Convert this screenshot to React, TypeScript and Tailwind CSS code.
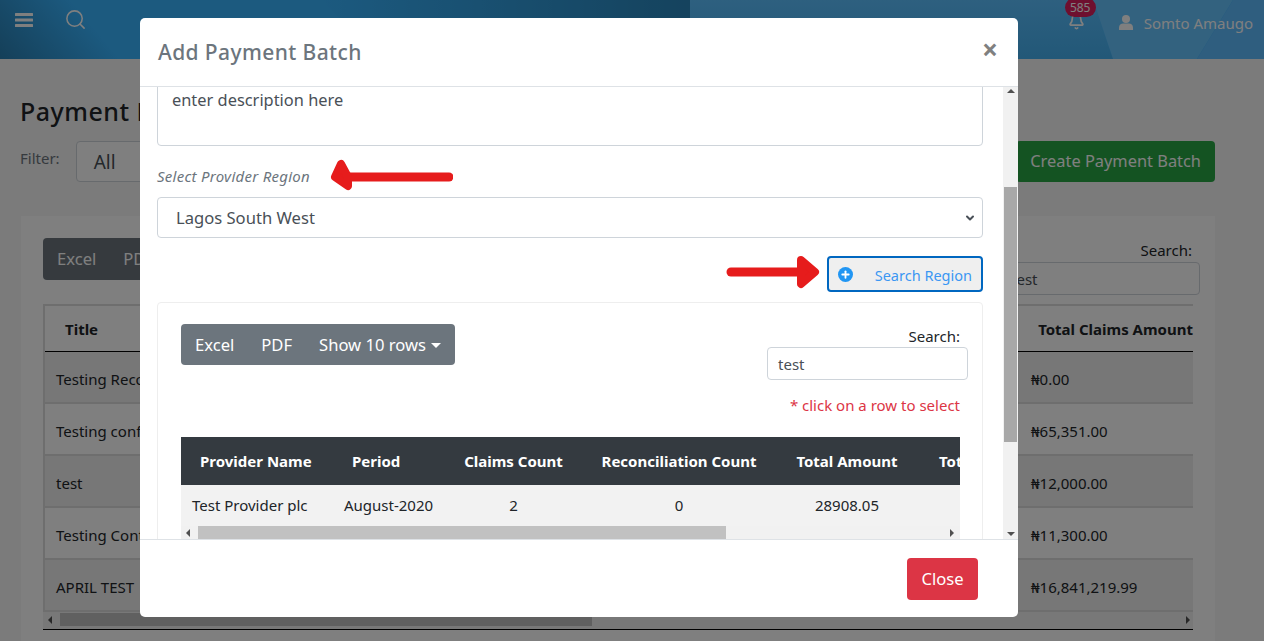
import { ChevronDown, Plus, Search, Bell } from 'lucide-react';

const outerRows = [
  { title: 'Testing Reco', amount: '₦0.00', striped: true },
  { title: 'Testing conf', amount: '₦65,351.00', striped: false },
  { title: 'test', amount: '₦12,000.00', striped: true },
  { title: 'Testing Cont', amount: '₦11,300.00', striped: false },
  { title: 'APRIL TEST', amount: '₦16,841,219.99', striped: true },
];

function LeftArrow() {
  return (
    <svg width="124" height="36" viewBox="0 0 124 36" className="shrink-0">
      <path d="M19 18H120" stroke="#e61c1c" strokeWidth="9" strokeLinecap="round" />
      <path d="M12 5L6 18L19 27L19 18Z" fill="#e61c1c" stroke="#e61c1c" strokeWidth="8" strokeLinejoin="round" />
    </svg>
  );
}

function RightArrow() {
  return (
    <svg width="96" height="36" viewBox="0 0 96 36" className="-mt-1 mr-[6px] shrink-0">
      <path d="M6 18H80" stroke="#e61c1c" strokeWidth="9" strokeLinecap="round" />
      <path d="M76 6L90 18L76 30Z" fill="#e61c1c" stroke="#e61c1c" strokeWidth="8" strokeLinejoin="round" />
    </svg>
  );
}

function TriangleButton({ dir }: { dir: 'up' | 'down' | 'left' | 'right' }) {
  const d = {
    up: 'M1 6L5 2L9 6Z',
    down: 'M1 3L5 7L9 3Z',
    left: 'M6 1L2 5L6 9Z',
    right: 'M3 1L7 5L3 9Z',
  }[dir];
  return (
    <svg width="10" height="10" viewBox="0 0 10 10" className="shrink-0">
      <path d={d} fill="#505050" />
    </svg>
  );
}

function HeaderArt() {
  return (
    <svg width="1264" height="59" viewBox="0 0 1264 59" className="absolute inset-0">
      <defs>
        <linearGradient id="headerLeft" gradientUnits="userSpaceOnUse" x1="0" y1="59" x2="70" y2="0">
          <stop offset="0" stopColor="#2a7fb2" />
          <stop offset="1" stopColor="#38b4ff" />
        </linearGradient>
        <linearGradient id="headerMid" x1="0" y1="0" x2="1" y2="0">
          <stop offset="0" stopColor="#38b4ff" />
          <stop offset="1" stopColor="#2a86bc" />
        </linearGradient>
        <linearGradient id="headerWedge" x1="0" y1="0" x2="0" y2="1">
          <stop offset="0" stopColor="#5cc0ff" />
          <stop offset="1" stopColor="#44b0f0" />
        </linearGradient>
      </defs>
      <rect width="1264" height="59" fill="url(#headerLeft)" />
      <polygon points="322,0 690,0 690,59 380,59" fill="url(#headerMid)" />
      <polygon points="690,0 1093,0 1113,59 690,59" fill="url(#headerWedge)" />
      <polygon points="1093,0 1233,0 1197,59 1113,59" fill="#66c4ff" />
      <polygon points="1233,0 1264,0 1264,59 1197,59" fill="#5ebcff" />
    </svg>
  );
}

function Page() {
  return (
    <div className="min-h-[641px] bg-[#f6f6f6]">
      <header className="relative flex h-[59px] items-start pl-[15px] pr-[11px] text-white">
        <HeaderArt />
        <svg width="18" height="14" viewBox="0 0 18 14" className="relative mt-[13px]">
          <rect width="18" height="3" rx="0.5" fill="currentColor" />
          <rect y="5.5" width="18" height="3" rx="0.5" fill="currentColor" />
          <rect y="11" width="18" height="3" rx="0.5" fill="currentColor" />
        </svg>
        <Search size={23} strokeWidth={1.6} className="relative ml-[31px] mt-[8px]" />
        <div className="relative ml-auto flex items-start">
          <div className="relative mt-[13px]">
            <Bell size={17} strokeWidth={2.4} />
            <span className="absolute left-[-3px] top-[-15px] flex h-[19px] w-[31px] items-center justify-center rounded-full bg-[#dc1e5e] text-[12px] leading-none text-white">585</span>
          </div>
          <svg width="14" height="15" viewBox="0 0 14 15" className="ml-[34px] mt-[15px]">
            <circle cx="7" cy="4" r="4" fill="currentColor" />
            <path d="M0 15V12.5C0 10 2 8.5 4 8.5H10C12 8.5 14 10 14 12.5V15Z" fill="currentColor" />
          </svg>
          <span className="ml-[11px] mt-[12px] text-[15px] leading-[22px]">Somto Amaugo</span>
        </div>
      </header>

      <main className="px-5 pt-[36px]">
        <h1 className="text-[25px] leading-[32px] font-medium tracking-[0.5px] text-[#212529]">Payment B</h1>
        <div className="mt-[14px] flex items-start justify-between pr-[29px]">
          <div className="flex">
            <span className="mt-[7px] text-[15px] leading-5 text-[#6c757d]">Filter:</span>
            <div className="ml-[16px] flex h-[41px] w-[300px] items-center rounded border border-[#ced4da] bg-white px-[17px] pt-[2px] text-[19px] text-[#495057]">All</div>
          </div>
          <button className="h-[41px] rounded bg-[#28a745] px-[14px] text-[16.4px] text-white">Create Payment Batch</button>
        </div>

        <section className="ml-px mr-[29px] mt-[34px] h-[440px] bg-white px-[22px] pt-[22px]">
          <div className="flex items-start justify-between">
            <div className="flex h-[42px] items-center rounded bg-[#6c757d] px-[14px] text-[16.6px] text-white">
              <span>Excel</span>
              <span className="ml-[27px]">PDF</span>
            </div>
            <div className="mr-[-7px] mt-[2px]">
              <div className="pr-2 text-right text-[15px] leading-5 text-[#212529]">Search:</div>
              <div className="mt-[2px] h-[33px] w-[200px] rounded border border-[#ced4da] px-[10px] py-[6px] text-[15px] leading-5 text-[#495057]">test</div>
            </div>
          </div>
          <div className="mt-[9px] border-l-2 border-[#dcdcdc]">
            <div className="flex h-[48px] items-center justify-between border-b border-t-2 border-b-black border-t-[#dcdcdc] pl-5 pt-[2px] text-[15px] font-bold text-[#212529]">
              <span>Title</span>
              <span>Total Claims Amount</span>
            </div>
            {outerRows.map((row) => (
              <div key={row.title} className={`flex h-[52px] items-center justify-between border-b-2 border-[#dcdcdc] pl-[11px] pt-[5px] text-[15px] text-[#212529] ${row.striped ? 'bg-[#eeeeee]' : 'bg-white'}`}>
                <span>{row.title}</span>
                <span className="w-[162px]">{row.amount}</span>
              </div>
            ))}
          </div>
          <div className="flex h-[18px] items-center border-b border-black bg-[#f1f1f1] pb-[2px]">
            <div className="ml-[3px]"><TriangleButton dir="left" /></div>
            <div className="ml-[4px] h-[13px] w-[532px] bg-[#c1c1c1]" />
            <div className="ml-auto"><TriangleButton dir="right" /></div>
          </div>
        </section>
      </main>
    </div>
  );
}

function Modal() {
  return (
    <div className="absolute inset-0 bg-black/50 pl-[140px] pt-[18px]">
      <div className="flex h-[599px] w-[878px] flex-col rounded-[5px] bg-white">
        <div className="flex h-[69px] shrink-0 items-center justify-between border-b border-[#dee2e6] pl-[18px] pr-[20px]">
          <h2 className="pt-[2px] text-[21px] font-medium tracking-[0.4px] text-[#6c757d]">Add Payment Batch</h2>
          <span className="-mt-1.5 text-[28px] font-bold leading-none text-[#808080]">×</span>
        </div>

        <div className="flex min-h-0 flex-1">
          <div className="min-w-0 flex-1 overflow-hidden pl-[17px] pr-5">
            <div className="mt-[-20px] h-[79px] rounded border border-[#ced4da] px-[14px] pt-[20px] text-[16.4px] text-[#495057]">enter description here</div>

            <div className="mt-[19px] flex h-[24px] items-center">
              <span className="pb-[2px] text-[15px] italic tracking-[0.27px] text-[#6c757d]">Select Provider Region</span>
              <div className="ml-[19px]"><LeftArrow /></div>
            </div>

            <div className="mt-[8px] flex h-[41px] items-center justify-between rounded border border-[#ced4da] pl-[18px] pr-[6px] text-[16.6px] text-[#495057]">
              <span className="pt-[2px]">Lagos South West</span>
              <ChevronDown size={12} strokeWidth={4} />
            </div>

            <div className="mt-[18px] flex items-center justify-end">
              <RightArrow />
              <button className="flex h-[36px] w-[156px] items-center justify-between rounded border-2 border-[#0067c0] bg-[#efefef] pl-[9px] pr-[9px] text-[14.5px] text-[#3b97f3]">
                <span className="flex h-[15px] w-[15px] items-center justify-center rounded-full bg-[#2196f3]">
                  <Plus size={11} strokeWidth={4} className="text-white" />
                </span>
                <span className="pt-[4px]">Search Region</span>
              </button>
            </div>

            <div className="mt-[10px] h-[300px] rounded border border-[#eeeeee] pl-[23px] pr-[22px] pt-[21px]">
              <div className="flex items-start justify-between">
                <div className="flex h-[41px] items-center gap-[27px] rounded bg-[#6c757d] px-[14px] pt-[2px] text-[16.6px] text-white">
                  <span>Excel</span>
                  <span>PDF</span>
                  <span className="flex items-center">
                    Show 10 rows
                    <span className="ml-[5px] border-x-[5px] border-t-[5px] border-x-transparent border-t-white" />
                  </span>
                </div>
                <div className="mr-[-8px] mt-[2px]">
                  <div className="pr-2 text-right text-[15px] leading-5 text-[#212529]">Search:</div>
                  <div className="mt-px h-[33px] w-[201px] rounded border border-[#ced4da] px-[10px] py-[6px] text-[15px] leading-5 text-[#495057]">test</div>
                </div>
              </div>
              <div className="mt-[14px] text-right text-[15px] leading-[22px] text-[#dc3545]">* click on a row to select</div>
              <div className="mt-[21px] overflow-hidden">
                <div className="grid h-[48px] w-[960px] grid-cols-[151px_113px_137px_194px_142px_223px] items-center whitespace-nowrap bg-[#343a40] text-center text-[15px] font-bold text-white">
                  <span className="pl-[19px] text-left">Provider Name</span>
                  <span className="pl-[20px] text-left">Period</span>
                  <span>Claims Count</span>
                  <span>Reconciliation Count</span>
                  <span>Total Amount</span>
                  <span className="pl-[21px] text-left">Total Claims Amount</span>
                </div>
                <div className="grid h-[41px] w-[960px] grid-cols-[151px_113px_137px_194px_142px_223px] items-center bg-[#f2f2f2] text-center text-[15px] text-[#212529]">
                  <span className="pl-[11px] text-left">Test Provider plc</span>
                  <span className="pl-[12px] text-left">August-2020</span>
                  <span>2</span>
                  <span>0</span>
                  <span>28908.05</span>
                  <span />
                </div>
                <div className="flex h-[13px] items-center bg-[#f1f1f1]">
                  <div className="ml-[3px]"><TriangleButton dir="left" /></div>
                  <div className="ml-[4px] h-[13px] w-[528px] bg-[#c1c1c1]" />
                  <div className="ml-auto mr-[3px]"><TriangleButton dir="right" /></div>
                </div>
              </div>
            </div>
          </div>

          <div className="flex w-[15px] shrink-0 flex-col items-center bg-[#f1f1f1]">
            <TriangleButton dir="up" />
            <div className="mt-[90px] h-[255px] w-[13px] bg-[#a8a8a8]" />
            <div className="mt-auto"><TriangleButton dir="down" /></div>
          </div>
        </div>

        <div className="flex h-[78px] shrink-0 items-center justify-end border-t border-[#dee2e6] pr-10">
          <button className="h-[42px] w-[71px] rounded bg-[#dc3545] pt-[2px] text-[16.6px] text-white">Close</button>
        </div>
      </div>
    </div>
  );
}

export default function App() {
  return (
    <div className="relative h-[641px] overflow-hidden font-['Noto_Sans',sans-serif]">
      <Page />
      <Modal />
    </div>
  );
}
